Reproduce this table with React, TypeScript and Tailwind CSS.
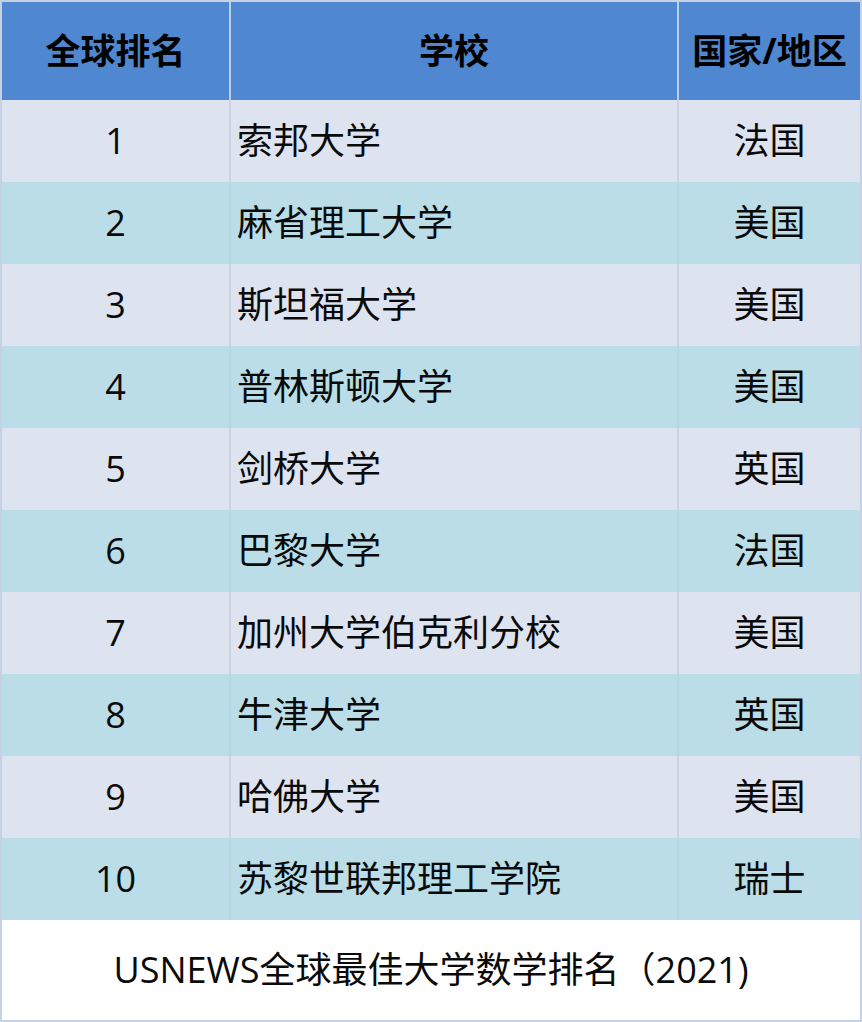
const rows = [
  { rank: "1", school: "索邦大学", country: "法国" },
  { rank: "2", school: "麻省理工大学", country: "美国" },
  { rank: "3", school: "斯坦福大学", country: "美国" },
  { rank: "4", school: "普林斯顿大学", country: "美国" },
  { rank: "5", school: "剑桥大学", country: "英国" },
  { rank: "6", school: "巴黎大学", country: "法国" },
  { rank: "7", school: "加州大学伯克利分校", country: "美国" },
  { rank: "8", school: "牛津大学", country: "英国" },
  { rank: "9", school: "哈佛大学", country: "美国" },
  { rank: "10", school: "苏黎世联邦理工学院", country: "瑞士" },
];

const font = {
  fontFamily: '"Open Sans", "Noto Sans CJK SC", sans-serif',
};

export default function App() {
  return (
    <div
      className="w-[862px] h-[1022px] border-2 border-[#c6d2e4] bg-white text-[#0a0a0a]"
      style={font}
    >
      <div className="grid grid-cols-[229px_448px_1fr] h-[98px] bg-[#4f87d1] text-[35px] font-bold text-black">
        <div className="flex items-center justify-center border-r-2 border-[#bcd0ee]">
          全球排名
        </div>
        <div className="flex items-center justify-center border-r-2 border-[#bcd0ee]">
          学校
        </div>
        <div className="flex items-center justify-center whitespace-nowrap">
          国家/地区
        </div>
      </div>
      {rows.map((r, i) => (
        <div
          key={r.rank}
          className={`grid grid-cols-[229px_448px_1fr] h-[82px] text-[36px] ${
            i % 2 === 0 ? "bg-[#dde3ef]" : "bg-[#badde7]"
          }`}
        >
          <div
            className={`flex items-center justify-center border-r-2 ${
              i % 2 === 0 ? "border-[#ccd4e2]" : "border-[#b3d6e0]"
            }`}
          >
            {r.rank}
          </div>
          <div
            className={`flex items-center pl-[6px] border-r-2 whitespace-nowrap ${
              i % 2 === 0 ? "border-[#ccd4e2]" : "border-[#b3d6e0]"
            }`}
          >
            {r.school}
          </div>
          <div className="flex items-center justify-center">{r.country}</div>
        </div>
      ))}
      <div className="flex h-[100px] items-center justify-center text-[36px] whitespace-nowrap">
        USNEWS全球最佳大学数学排名（2021)
      </div>
    </div>
  );
}
